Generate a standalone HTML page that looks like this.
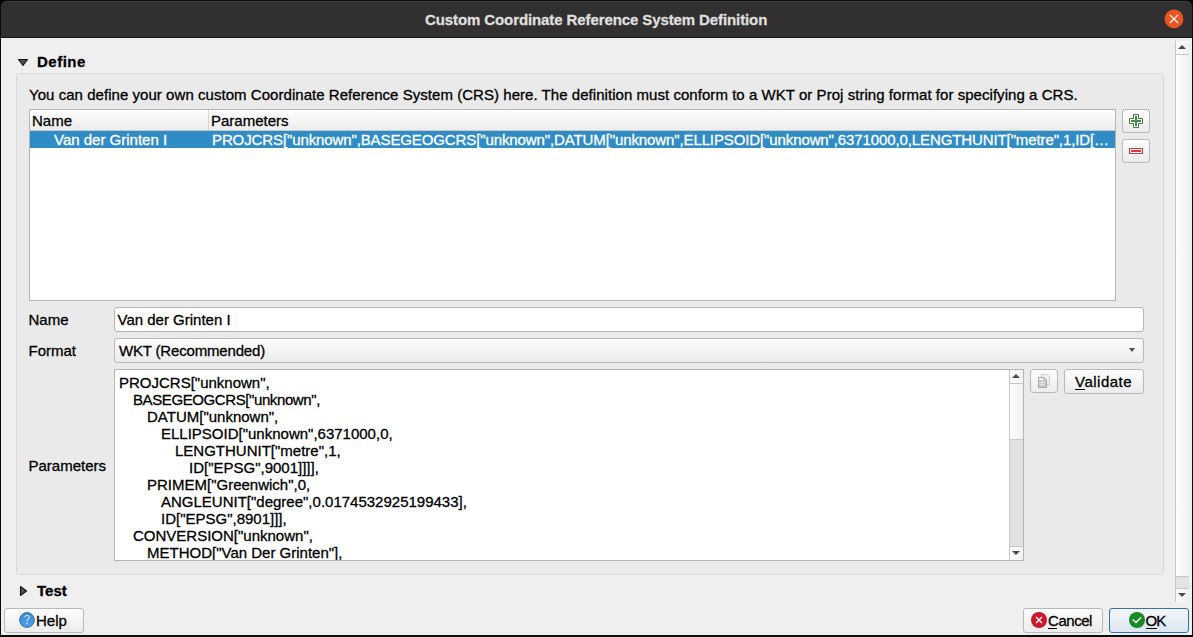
<!DOCTYPE html>
<html><head><meta charset="utf-8">
<style>
*{box-sizing:border-box;margin:0;padding:0}
html,body{width:1193px;height:637px;overflow:hidden;background:#000}
body{font-family:"Liberation Sans",sans-serif;font-size:15px;color:#000;position:relative}
.t{-webkit-text-stroke:0.3px currentColor}
.a{position:absolute}
.t{position:absolute;white-space:nowrap;line-height:17px;height:17px}
#win{left:0;top:0;width:1193px;height:637px;background:#0c0c0c;border-radius:7px 7px 0 0}
#title{left:1px;top:1px;width:1191px;height:37px;background:#322f30;border-radius:6px 6px 0 0;border-bottom:1px solid #161616;box-shadow:inset 0 1px 0 #3e3b3c}
#content{left:1px;top:38px;width:1191px;height:597px;background:#efefef}
.btn{position:absolute;border:1px solid #b9b9b9;border-radius:3px;background:linear-gradient(#fdfdfd,#ececec)}
.field{position:absolute;border:1px solid #b5b5b5;border-radius:3px;background:#fff}
.tri-down{position:absolute;width:0;height:0;border-left:5.5px solid transparent;border-right:5.5px solid transparent;border-top:7px solid #4a4a4a}
.tri-up{position:absolute;width:0;height:0;border-left:4px solid transparent;border-right:4px solid transparent;border-bottom:4px solid #4a4a4a}
.sd{position:absolute;width:0;height:0;border-left:4px solid transparent;border-right:4px solid transparent;border-top:4px solid #4a4a4a}
</style></head><body>
<div id="win" class="a"></div>
<div id="title" class="a"></div>
<div class="t" style="left:425px;top:11px;font-weight:bold;font-size:15px;letter-spacing:-0.1px;color:#dfdfdf">Custom Coordinate Reference System Definition</div>
<svg class="a" style="left:1160px;top:5px" width="28" height="28"><circle cx="14" cy="13.9" r="9.4" fill="#e95420"/><path d="M9.9 9.8L18.1 18M18.1 9.8L9.9 18" stroke="#fff" stroke-width="1.2"/></svg>
<div id="content" class="a"></div>

<!-- outer scrollbar -->
<div class="a" style="left:1175px;top:41px;width:14px;height:561px;background:linear-gradient(to right,#fdfdfd,#f1f1f1);border-left:1px solid #c8c8c8"></div>
<div class="tri-up" style="left:1178px;top:45px"></div>
<div class="a" style="left:1176px;top:54px;width:13px;height:1px;background:#c8c8c8"></div>
<div class="a" style="left:1176px;top:576px;width:13px;height:13px;background:#e3e3e3;border-top:1px solid #c8c8c8;border-bottom:1px solid #c8c8c8"></div>
<div class="sd" style="left:1178px;top:593px"></div>

<!-- Define header -->
<svg class="a" style="left:0;top:50px" width="40" height="24"><polygon points="18.5,9.5 27.5,9.5 23,15.5" fill="#505050" stroke="#141414" stroke-width="1.1" stroke-linejoin="round"/></svg>
<div class="t" style="left:37px;top:53px;font-weight:bold;letter-spacing:0.5px">Define</div>

<!-- group box -->
<div class="a" style="left:16px;top:73px;width:1148px;height:502px;background:#eaeaea;border:1px solid #d8d8d8;border-radius:2px"></div>
<div class="t" style="left:29px;top:86px;letter-spacing:0.045px">You can define your own custom Coordinate Reference System (CRS) here. The definition must conform to a WKT or Proj string format for specifying a CRS.</div>

<!-- table -->
<div class="a" style="left:29px;top:109px;width:1087px;height:192px;background:#fff;border:1px solid #b5b5b5"></div>
<div class="a" style="left:30px;top:110px;width:1085px;height:21px;background:linear-gradient(#fefefe,#ececec);border-bottom:1px solid #c9c9c9"></div>
<div class="a" style="left:208px;top:110px;width:1px;height:20px;background:#d4d4d4"></div>
<div class="t" style="left:32px;top:112px">Name</div>
<div class="t" style="left:211px;top:112px">Parameters</div>
<div class="a" style="left:30px;top:131px;width:1085px;height:17px;background:#308cc6"></div>
<div class="t" style="left:54px;top:131px;color:#fff">Van der Grinten I</div>
<div class="t" style="left:212px;top:131px;color:#fff;letter-spacing:-0.11px">PROJCRS["unknown",BASEGEOGCRS["unknown",DATUM["unknown",ELLIPSOID["unknown",6371000,0,LENGTHUNIT["metre",1,ID[…</div>

<!-- add/remove -->
<div class="btn" style="left:1122px;top:109px;width:28px;height:24px"></div>
<svg class="a" style="left:1129px;top:114px" width="14" height="14"><path d="M4.5 0.5H9.5V4.5H13.5V9.5H9.5V13.5H4.5V9.5H0.5V4.5H4.5Z" fill="#f4f8f4" stroke="#3f7f3f" stroke-width="1"/><path d="M6 2H8V6H12V8H8V12H6V8H2V6H6Z" fill="#4a8a4a"/></svg>
<div class="btn" style="left:1122px;top:139px;width:28px;height:24px"></div>
<svg class="a" style="left:1129px;top:148px" width="14" height="6"><rect x="0.5" y="0.5" width="13" height="5" fill="#fff" stroke="#e23a3a"/><rect x="2" y="2" width="10" height="2" fill="#e23a3a"/></svg>

<!-- Name / Format -->
<div class="t" style="left:28.5px;top:311px">Name</div>
<div class="field" style="left:114px;top:307px;width:1030px;height:25px"></div>
<div class="t" style="left:117.5px;top:311px">Van der Grinten I</div>
<div class="t" style="left:28.5px;top:342px">Format</div>
<div class="btn" style="left:114px;top:338px;width:1030px;height:25px"></div>
<div class="t" style="left:119px;top:342px;letter-spacing:-0.17px">WKT (Recommended)</div>
<div class="sd" style="left:1129px;top:348px;border-left-width:3.5px;border-right-width:3.5px;border-top-width:4.5px;border-top-color:#4c4c4c"></div>

<!-- Parameters -->
<div class="t" style="left:28.5px;top:457px">Parameters</div>
<div class="field" style="left:114px;top:369px;width:910px;height:192px;border-radius:0;overflow:hidden"></div>
<div class="a" style="left:1009px;top:370px;width:14px;height:190px;background:linear-gradient(to right,#fdfdfd,#f1f1f1);border-left:1px solid #c8c8c8"></div>
<div class="tri-up" style="left:1012px;top:374px"></div>
<div class="a" style="left:1010px;top:383px;width:13px;height:1px;background:#c8c8c8"></div>
<div class="a" style="left:1010px;top:439px;width:13px;height:108px;background:#e2e2e2;border-top:1px solid #c8c8c8;border-bottom:1px solid #c8c8c8"></div>
<div class="sd" style="left:1012px;top:551px"></div>
<div class="a" style="left:115px;top:369px;width:894px;height:191px;overflow:hidden">
<div class="t" style="left:4px;top:5px">PROJCRS["unknown",</div>
<div class="t" style="left:18px;top:22px;letter-spacing:-0.4px">BASEGEOGCRS["unknown",</div>
<div class="t" style="left:32px;top:39px">DATUM["unknown",</div>
<div class="t" style="left:46px;top:56px">ELLIPSOID["unknown",6371000,0,</div>
<div class="t" style="left:60px;top:73px">LENGTHUNIT["metre",1,</div>
<div class="t" style="left:74px;top:90px">ID["EPSG",9001]]]],</div>
<div class="t" style="left:32px;top:107px">PRIMEM["Greenwich",0,</div>
<div class="t" style="left:46px;top:124px">ANGLEUNIT["degree",0.0174532925199433],</div>
<div class="t" style="left:46px;top:141px">ID["EPSG",8901]]],</div>
<div class="t" style="left:18px;top:158px">CONVERSION["unknown",</div>
<div class="t" style="left:32px;top:175px">METHOD["Van Der Grinten"],</div>
</div>

<div class="btn" style="left:1030px;top:369px;width:28px;height:24px"></div>
<svg class="a" style="left:1037px;top:373px" width="14" height="16"><path d="M4.5 1.5H10L12.5 4V11.5H4.5Z" fill="#f2f2f2" stroke="#cdcdcd"/><path d="M1.5 4.5H7L9.5 7V14.5H1.5Z" fill="#cbcbcb" stroke="#a8a8a8"/><rect x="2" y="5" width="4" height="2" fill="#f6f6f6"/><rect x="2.5" y="9" width="5" height="1" fill="#e6e6e6"/><rect x="2.5" y="11" width="5" height="1" fill="#e6e6e6"/></svg>
<div class="btn" style="left:1064px;top:369px;width:80px;height:25px"></div>
<div class="t" style="left:1075px;top:373px;letter-spacing:0.5px">Validate</div>
<div class="a" style="left:1075px;top:389px;width:10px;height:1px;background:#000"></div>

<!-- Test -->
<svg class="a" style="left:0;top:580px" width="40" height="24"><polygon points="20.5,6.5 26.5,11 20.5,15.5" fill="#505050" stroke="#141414" stroke-width="1.1" stroke-linejoin="round"/></svg>
<div class="t" style="left:37px;top:582px;font-weight:bold">Test</div>

<!-- bottom buttons -->
<div class="btn" style="left:4px;top:608px;width:80px;height:25px"></div>
<svg class="a" style="left:19px;top:612px" width="16" height="16"><defs><linearGradient id="hg" x1="0" y1="0" x2="0" y2="1"><stop offset="0" stop-color="#3a8ad6"/><stop offset="1" stop-color="#4aa0e6"/></linearGradient></defs><circle cx="8" cy="8" r="7.4" fill="url(#hg)" stroke="#2a68a8" stroke-width="0.9"/><path d="M5.6 5.4C5.9 3.9 7.2 3.4 8.3 3.5C9.6 3.6 10.4 4.5 10.3 5.5C10.2 6.6 9.1 7 8.5 7.6C8.1 8 8 8.6 8 9.2" fill="none" stroke="#d8ebfa" stroke-width="1.1"/><rect x="7.3" y="10.6" width="1.4" height="1.4" fill="#d8ebfa"/></svg>
<div class="t" style="left:36px;top:612px">Help</div>

<div class="btn" style="left:1023px;top:608px;width:80px;height:25px"></div>
<svg class="a" style="left:1031px;top:612px" width="16" height="16"><circle cx="8" cy="8" r="8" fill="#c9182c"/><path d="M5 5L11 11M11 5L5 11" stroke="#fff" stroke-width="1.4"/></svg>
<div class="t" style="left:1048px;top:611.5px;letter-spacing:-0.45px">Cancel</div>
<div class="a" style="left:1048px;top:628px;width:9px;height:1px;background:#000"></div>

<div class="btn" style="left:1109px;top:608px;width:80px;height:25px;border-color:#3573aa;background:linear-gradient(#f2f6fa,#dbe6f0)"></div>
<svg class="a" style="left:1129px;top:612px" width="16" height="16"><circle cx="8" cy="8" r="8" fill="#168a25"/><path d="M3.6 7.5L7 10.5L12.2 5.2" stroke="#fff" stroke-width="1.5" fill="none"/></svg>
<div class="t" style="left:1145.5px;top:611.5px;letter-spacing:-1px">OK</div>
<div class="a" style="left:1146px;top:628px;width:11px;height:1px;background:#000"></div>
</body></html>
